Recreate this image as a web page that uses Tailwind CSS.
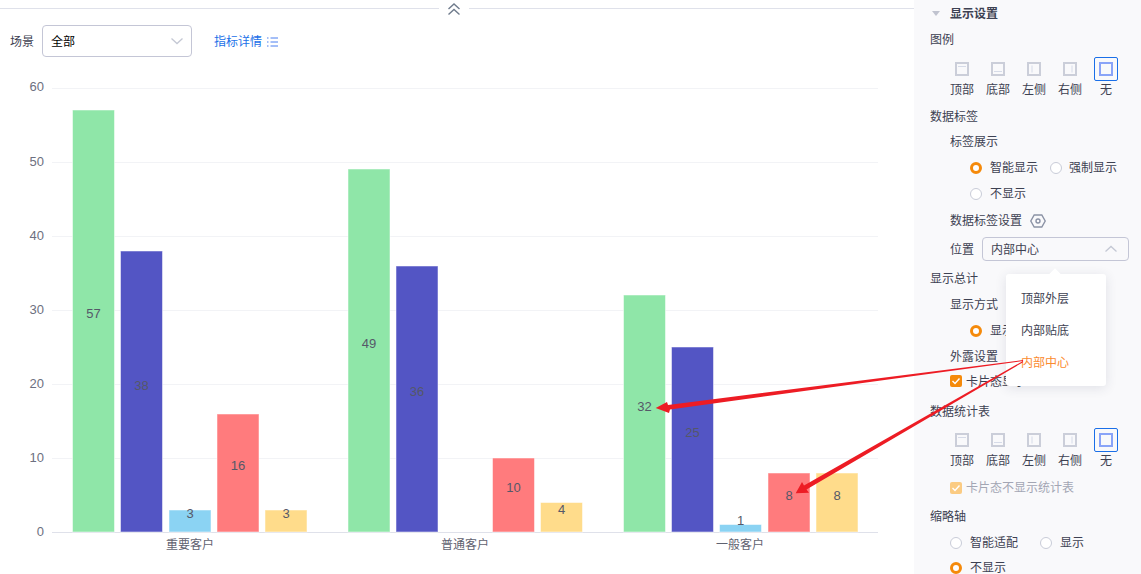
<!DOCTYPE html>
<html lang="zh">
  <head>
    <meta charset="UTF-8" />
    <title>图表设置</title>
    <script src="https://cdn.jsdelivr.net/npm/@tailwindcss/browser@4"></script>
  </head>
  <body class="relative w-[1141px] h-[574px] overflow-hidden bg-white font-['Liberation_Sans','Noto_Sans_CJK_SC',sans-serif] text-xs text-[#3d4152]">
    <div class="flex h-full">
      <!-- left: chart area -->
      <div class="w-[914px] shrink-0">
        <div class="flex items-center h-[17px]">
          <div class="h-px w-[439px] bg-[#dfe1ea]"></div>
          <div class="w-[30px] flex justify-center">
            <svg width="14" height="14" viewBox="0 0 14 14" fill="none" stroke="#6f7b8c" stroke-width="1.4">
              <path d="M1.500 7l5.500-5 5.500 5M1.500 12.500l5.500-5 5.500 5" />
            </svg>
          </div>
          <div class="h-px flex-1 bg-[#dfe1ea]"></div>
        </div>
        <div class="flex items-center h-[32px] mt-2 pl-[10px]">
          <span class="w-[32px] mt-[2px]">场景</span>
          <div class="w-[150px] h-[32px] border border-[#c4c6d6] rounded-[4px] flex items-center justify-between pl-2 pr-[7px] text-black">
            <span class="mt-[2px]">全部</span>
            <svg width="14" height="14" viewBox="0 0 14 14" fill="none" stroke="#c4c8d4" stroke-width="1.3">
              <path d="M1.500 4.500L7 9.500l5.500-5" />
            </svg>
          </div>
          <a class="ml-[22px] mt-[2px] text-[#1a6fe8]">指标详情</a>
          <svg class="ml-[5px] mt-[1px]" width="11" height="12" viewBox="0 0 11 12" stroke="#4a7ff0" stroke-width="1">
            <path d="M0 2h1.500M0 6h1.500M0 10h1.500M3.500 2h7.500M3.500 6h7.500M3.500 10h7.500" />
          </svg>
        </div>
        <svg class="block" width="914" height="517" viewBox="0 57 914 517" font-size="12.5" fill="#5f6270">
          <g stroke="#f2f3f6" stroke-width="1">
            <path d="M52 88.500H878M52 162.500H878M52 236.500H878M52 310.500H878M52 384.500H878M52 458.500H878" />
          </g>
          <path d="M52 532.500H878" stroke="#dfe1ea" />
          <g text-anchor="end" fill="#6d7080" font-size="13">
            <text x="44" y="91">60</text>
            <text x="44" y="166">50</text>
            <text x="44" y="240">40</text>
            <text x="44" y="314">30</text>
            <text x="44" y="388">20</text>
            <text x="44" y="462">10</text>
            <text x="44" y="536">0</text>
          </g>
          <g stroke="#ffffff" stroke-opacity="0.5">
            <g fill="#8fe6a8">
              <rect x="72.500" y="110" width="42" height="422" />
              <rect x="348" y="169" width="42" height="363" />
              <rect x="623.500" y="295" width="42" height="237" />
            </g>
            <g fill="#5355c4">
              <rect x="120.500" y="251" width="42" height="281" />
              <rect x="396" y="266" width="42" height="266" />
              <rect x="671.500" y="347" width="42" height="185" />
            </g>
            <g fill="#8bd3f3">
              <rect x="169" y="510" width="42" height="22" />
              <rect x="719.500" y="524.500" width="42" height="7.500" />
            </g>
            <g fill="#ff7b7d">
              <rect x="217" y="414" width="42" height="118" />
              <rect x="492.500" y="458" width="42" height="74" />
              <rect x="768" y="473" width="42" height="59" />
            </g>
            <g fill="#ffdc8b">
              <rect x="265" y="510" width="42" height="22" />
              <rect x="540.500" y="502.500" width="42" height="29.500" />
              <rect x="816" y="473" width="42" height="59" />
            </g>
          </g>
          <g text-anchor="middle" fill="#555868" font-size="13">
            <text x="93.500" y="318">57</text>
            <text x="141.500" y="390">38</text>
            <text x="190" y="518">3</text>
            <text x="238" y="470">16</text>
            <text x="286" y="518">3</text>
            <text x="369" y="348">49</text>
            <text x="417" y="396">36</text>
            <text x="513.500" y="492">10</text>
            <text x="561.500" y="514">4</text>
            <text x="644.500" y="411">32</text>
            <text x="692.500" y="437">25</text>
            <text x="740.500" y="525">1</text>
            <text x="789" y="500">8</text>
            <text x="837" y="500">8</text>
          </g>
          <g text-anchor="middle" font-size="12">
            <text x="190" y="549">重要客户</text>
            <text x="465" y="549">普通客户</text>
            <text x="740" y="549">一般客户</text>
          </g>
        </svg>
      </div>

      <!-- right: settings panel -->
      <div class="flex-1 bg-[#f9f9fb] pl-4 pt-px">
        <div class="h-[26px] flex items-center pl-[2px] font-bold">
          <svg width="8" height="6" viewBox="0 0 8 6" fill="#c0c3cf"><path d="M0 0h8L4 5z" /></svg>
          <span class="ml-[10px]">显示设置</span>
        </div>
        <div class="h-[26px] flex items-center">图例</div>
        <div class="h-[51px] flex pl-[14px] pt-[4px]">
          <div class="w-9 flex flex-col items-center">
            <div class="w-6 h-6 flex items-center justify-center">
              <svg width="14" height="14" viewBox="0 0 14 14" fill="none" stroke-width="2" stroke="#cbced9"><rect x="1" y="1" width="12" height="12" /><path d="M3 4.500h8" stroke-width="1" stroke="#d6dbe8" /></svg>
            </div>
            <span class="mt-px">顶部</span>
          </div>
          <div class="w-9 flex flex-col items-center">
            <div class="w-6 h-6 flex items-center justify-center">
              <svg width="14" height="14" viewBox="0 0 14 14" fill="none" stroke-width="2" stroke="#cbced9"><rect x="1" y="1" width="12" height="12" /><path d="M3 9.500h8" stroke-width="1" stroke="#d6dbe8" /></svg>
            </div>
            <span class="mt-px">底部</span>
          </div>
          <div class="w-9 flex flex-col items-center">
            <div class="w-6 h-6 flex items-center justify-center">
              <svg width="14" height="14" viewBox="0 0 14 14" fill="none" stroke-width="2" stroke="#cbced9"><rect x="1" y="1" width="12" height="12" /><path d="M5 3.500v7" stroke-width="1" stroke="#d6dbe8" /></svg>
            </div>
            <span class="mt-px">左侧</span>
          </div>
          <div class="w-9 flex flex-col items-center">
            <div class="w-6 h-6 flex items-center justify-center">
              <svg width="14" height="14" viewBox="0 0 14 14" fill="none" stroke-width="2" stroke="#cbced9"><rect x="1" y="1" width="12" height="12" /><path d="M9 3.500v7" stroke-width="1" stroke="#d6dbe8" /></svg>
            </div>
            <span class="mt-px">右侧</span>
          </div>
          <div class="w-9 flex flex-col items-center">
            <div class="w-6 h-6 flex items-center justify-center border border-[#1a6fe8] rounded-[2px]">
              <svg width="14" height="14" viewBox="0 0 14 14" fill="none" stroke-width="2" stroke="#8aa4f8"><rect x="1" y="1" width="12" height="12" /></svg>
            </div>
            <span class="mt-px">无</span>
          </div>
        </div>
        <div class="h-[26px] flex items-center">数据标签</div>
        <div class="h-[24px] flex items-center pl-5">标签展示</div>
        <div class="h-[28px] flex items-center pl-10">
          <span class="w-3 h-3 rounded-full border-[3px] border-[#f58a0b] bg-white"></span>
          <span class="ml-2">智能显示</span>
          <span class="ml-3 w-3 h-3 rounded-full border border-[#c9ccd8] bg-white"></span>
          <span class="ml-[7px]">强制显示</span>
        </div>
        <div class="h-[24px] flex items-center pl-10">
          <span class="w-3 h-3 rounded-full border border-[#c9ccd8] bg-white"></span>
          <span class="ml-2">不显示</span>
        </div>
        <div class="h-[30px] flex items-center pl-5">
          数据标签设置
          <svg class="ml-2" width="16" height="14" viewBox="0 0 16 14" fill="none" stroke="#8b92a5" stroke-width="1.400">
            <path d="M4.200 1h7.600l3.400 6-3.400 6H4.200L0.800 7z" /><circle cx="8" cy="7" r="2" />
          </svg>
        </div>
        <div class="h-[28px] flex items-center pl-5">
          <span class="w-[32px]">位置</span>
          <div class="w-[147px] h-6 -mt-[2px] border border-[#c4c6d6] rounded-[4px] flex items-center justify-between pl-2 pr-[10px]">
            <span class="mt-[2px]">内部中心</span>
            <svg width="14" height="14" viewBox="0 0 14 14" fill="none" stroke="#c4c8d4" stroke-width="1.3"><path d="M1.500 9.500L7 4.500l5.500 5" /></svg>
          </div>
        </div>
        <div class="h-[30px] flex items-center">显示总计</div>
        <div class="h-[22px] flex items-center pl-5">显示方式</div>
        <div class="h-[30px] flex items-center pl-10">
          <span class="w-3 h-3 rounded-full border-[3px] border-[#f58a0b] bg-white"></span>
          <span class="ml-2">显示</span>
        </div>
        <div class="h-[22px] flex items-center pl-5">外露设置</div>
        <div class="h-[28px] flex items-center pl-5">
          <span class="w-3 h-3 -mt-[2px] rounded-[2px] bg-[#f58a0b] flex items-center justify-center">
            <svg width="10" height="10" viewBox="0 0 10 10" fill="none" stroke="#fff" stroke-width="1.400"><path d="M1.500 5l2.500 2.500 4.500-5" /></svg>
          </span>
          <span class="ml-1">卡片态显示</span>
        </div>
        <div class="h-[32px] flex items-center">数据统计表</div>
        <div class="h-[46px] flex pl-[14px]">
          <div class="w-9 flex flex-col items-center">
            <div class="w-6 h-6 flex items-center justify-center">
              <svg width="14" height="14" viewBox="0 0 14 14" fill="none" stroke-width="2" stroke="#cbced9"><rect x="1" y="1" width="12" height="12" /><path d="M3 4.500h8" stroke-width="1" stroke="#d6dbe8" /></svg>
            </div>
            <span class="mt-px">顶部</span>
          </div>
          <div class="w-9 flex flex-col items-center">
            <div class="w-6 h-6 flex items-center justify-center">
              <svg width="14" height="14" viewBox="0 0 14 14" fill="none" stroke-width="2" stroke="#cbced9"><rect x="1" y="1" width="12" height="12" /><path d="M3 9.500h8" stroke-width="1" stroke="#d6dbe8" /></svg>
            </div>
            <span class="mt-px">底部</span>
          </div>
          <div class="w-9 flex flex-col items-center">
            <div class="w-6 h-6 flex items-center justify-center">
              <svg width="14" height="14" viewBox="0 0 14 14" fill="none" stroke-width="2" stroke="#cbced9"><rect x="1" y="1" width="12" height="12" /><path d="M5 3.500v7" stroke-width="1" stroke="#d6dbe8" /></svg>
            </div>
            <span class="mt-px">左侧</span>
          </div>
          <div class="w-9 flex flex-col items-center">
            <div class="w-6 h-6 flex items-center justify-center">
              <svg width="14" height="14" viewBox="0 0 14 14" fill="none" stroke-width="2" stroke="#cbced9"><rect x="1" y="1" width="12" height="12" /><path d="M9 3.500v7" stroke-width="1" stroke="#d6dbe8" /></svg>
            </div>
            <span class="mt-px">右侧</span>
          </div>
          <div class="w-9 flex flex-col items-center">
            <div class="w-6 h-6 flex items-center justify-center border border-[#1a6fe8] rounded-[2px]">
              <svg width="14" height="14" viewBox="0 0 14 14" fill="none" stroke-width="2" stroke="#8aa4f8"><rect x="1" y="1" width="12" height="12" /></svg>
            </div>
            <span class="mt-px">无</span>
          </div>
        </div>
        <div class="h-[28px] flex items-center pl-5">
          <span class="w-3 h-3 rounded-[2px] bg-[#fbcb82] flex items-center justify-center">
            <svg width="10" height="10" viewBox="0 0 10 10" fill="none" stroke="#fff" stroke-width="1.400"><path d="M1.500 5l2.500 2.500 4.500-5" /></svg>
          </span>
          <span class="ml-1 text-[#a3a6b4]">卡片态不显示统计表</span>
        </div>
        <div class="h-[26px] flex items-center mt-[2px]">缩略轴</div>
        <div class="h-[26px] flex items-center pl-5">
          <span class="w-3 h-3 rounded-full border border-[#c9ccd8] bg-white"></span>
          <span class="ml-2">智能适配</span>
          <span class="ml-[22px] w-3 h-3 rounded-full border border-[#c9ccd8] bg-white"></span>
          <span class="ml-2">显示</span>
        </div>
        <div class="h-[24px] flex items-center pl-5">
          <span class="w-3 h-3 rounded-full border-[3px] border-[#f58a0b] bg-white"></span>
          <span class="ml-2">不显示</span>
        </div>
      </div>
    </div>

    <!-- dropdown menu over the panel -->
    <div class="absolute left-[1006px] top-[274px] w-[100px] h-[112px] bg-white rounded-[3px] shadow-[0_2px_12px_rgba(40,50,80,0.12)] pt-[9px] pl-[15px]">
      <div class="absolute left-[45px] -top-[4px] w-2 h-2 bg-white rotate-45"></div>
      <div class="h-8 flex items-center">顶部外层</div>
      <div class="h-8 flex items-center">内部贴底</div>
      <div class="h-8 flex items-center text-[#fb8a2e]">内部中心</div>
    </div>

    <!-- red annotation arrows -->
    <svg class="absolute left-0 top-0" width="1141" height="574" viewBox="0 0 1141 574" fill="#ed1c24">
      <path d="M655.700 408L667 402l1 3L1023 360v1L670 409.500l-1 3.500z" />
      <path d="M795.700 493.300L802 482l2 3.500L1023 361v1.200L806.500 489.500l2.500 3.200z" />
    </svg>
  </body>
</html>
